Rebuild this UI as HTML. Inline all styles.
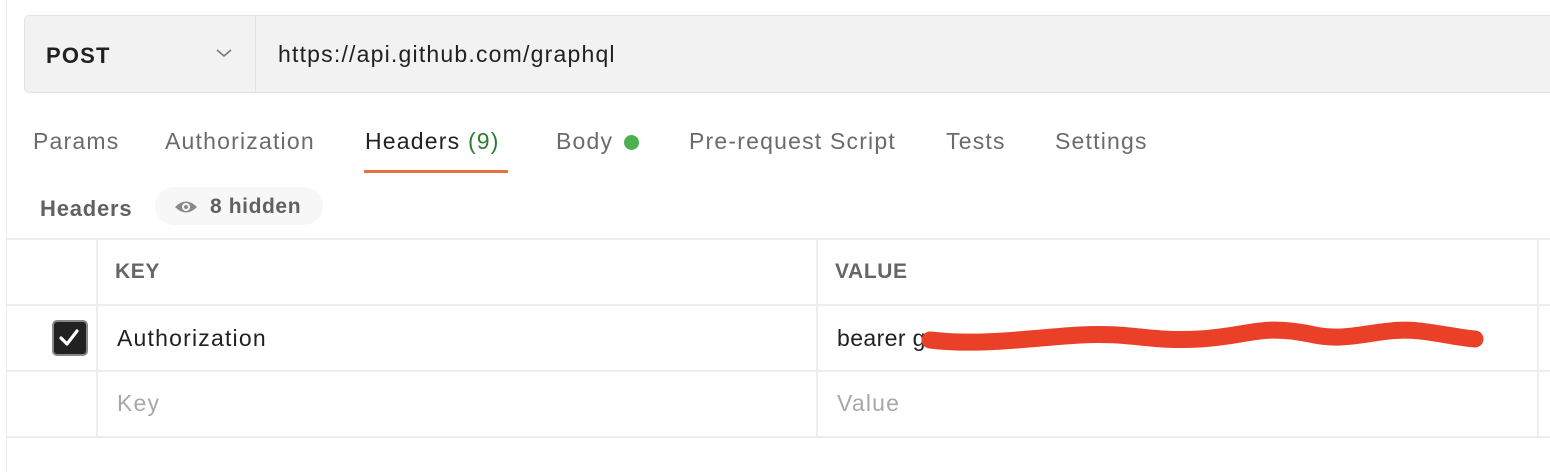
<!DOCTYPE html>
<html><head><style>
body{margin:0;width:1550px;height:472px;background:#fff;font-family:"Liberation Sans",Arial,sans-serif;position:relative;overflow:hidden;letter-spacing:1.2px}
.a{position:absolute}
.leftline{left:6px;top:0;width:1px;height:472px;background:#ececec}
.url{left:24px;top:15px;width:1560px;height:76px;background:#f2f2f2;border:1px solid #e3e3e3;border-radius:5px}
.tab{top:128px;font-size:23px;color:#6b6b6b;white-space:nowrap}
.hl{background:#ededed}
.vl{background:#ededed;width:2px}
</style></head><body>
<div class="a leftline"></div>
<div class="a url"></div>
<div class="a" style="left:255px;top:16px;width:1px;height:76px;background:#e3e3e3"></div>
<div class="a" style="left:46px;top:43px;font-size:22px;font-weight:bold;color:#212121">POST</div>
<svg class="a" style="left:215px;top:47px" width="18" height="12" viewBox="0 0 18 12"><path d="M2 3 L9 9 L16 3" fill="none" stroke="#777" stroke-width="1.6"/></svg>
<div class="a" style="left:278px;top:41px;font-size:23px;color:#212121">https://api.github.com/graphql</div>

<div class="a tab" style="left:33px">Params</div>
<div class="a tab" style="left:165px">Authorization</div>
<div class="a tab" style="left:365px;color:#212121">Headers <span style="color:#2e7d32">(9)</span></div>
<div class="a" style="left:364px;top:170px;width:144px;height:3px;background:#e8703f"></div>
<div class="a tab" style="left:556px">Body</div>
<div class="a" style="left:624px;top:135px;width:15px;height:15px;border-radius:50%;background:#4caf50"></div>
<div class="a tab" style="left:689px">Pre-request Script</div>
<div class="a tab" style="left:946px">Tests</div>
<div class="a tab" style="left:1055px">Settings</div>

<div class="a" style="left:40px;top:196px;font-size:22px;font-weight:bold;color:#616161;letter-spacing:0.8px">Headers</div>
<div class="a" style="left:155px;top:187px;width:168px;height:38px;border-radius:19px;background:#f7f7f7"></div>
<svg class="a" style="left:174px;top:199px" width="24" height="16" viewBox="0 0 24 16"><path d="M1 8 Q12 -3 23 8 Q12 19 1 8Z" fill="#8a8a8a"/><circle cx="12" cy="8" r="4" fill="#f7f7f7"/><circle cx="12" cy="8" r="2" fill="#8a8a8a"/></svg>
<div class="a" style="left:210px;top:195px;font-size:21px;font-weight:bold;color:#616161;letter-spacing:0.6px">8 hidden</div>

<div class="a hl" style="left:6px;top:238px;width:1544px;height:2px"></div>
<div class="a hl" style="left:6px;top:304px;width:1544px;height:2px"></div>
<div class="a hl" style="left:6px;top:370px;width:1544px;height:2px"></div>
<div class="a hl" style="left:6px;top:436px;width:1544px;height:2px"></div>
<div class="a vl" style="left:96px;top:239px;height:198px"></div>
<div class="a vl" style="left:816px;top:239px;height:198px"></div>
<div class="a vl" style="left:1537px;top:239px;height:198px"></div>

<div class="a" style="left:115px;top:260px;font-size:21px;font-weight:bold;color:#666;letter-spacing:0.6px">KEY</div>
<div class="a" style="left:835px;top:260px;font-size:21px;font-weight:bold;color:#666;letter-spacing:0.6px">VALUE</div>
<div class="a" style="left:52px;top:320px;width:32px;height:32px;border-radius:5px;background:#212121;border:2px solid #888"></div>
<svg class="a" style="left:56px;top:326px" width="28" height="24" viewBox="0 0 28 24"><path d="M5 12 L11 18 L21 5" fill="none" stroke="#fff" stroke-width="3.2" stroke-linecap="round" stroke-linejoin="round"/></svg>
<div class="a" style="left:117px;top:325px;font-size:23px;color:#212121">Authorization</div>
<div class="a" style="left:837px;top:325px;font-size:23px;color:#212121;letter-spacing:0.4px">bearer g</div>
<svg class="a" style="left:880px;top:318px" width="610" height="40" viewBox="0 0 610 40"><path d="M50 22 C100 28 150 20 200 17 C250 14 270 24 320 21 C370 18 380 6 430 16 C470 26 500 8 540 13 C565 16 580 20 595 21" fill="none" stroke="#e94027" stroke-width="17" stroke-linecap="round"/></svg>
<div class="a" style="left:117px;top:390px;font-size:23px;color:#a8a8a8">Key</div>
<div class="a" style="left:837px;top:390px;font-size:23px;color:#a8a8a8">Value</div>
</body></html>
